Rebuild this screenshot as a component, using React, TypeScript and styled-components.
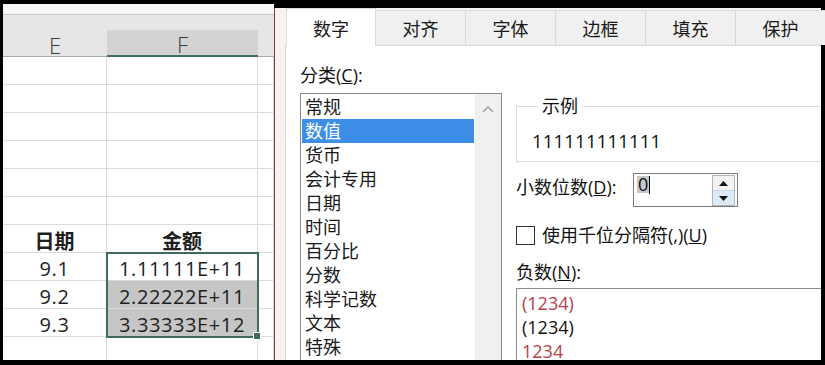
import React from 'react';
import styled, { createGlobalStyle } from 'styled-components';

const GlobalStyle = createGlobalStyle`
	html, body {
		margin: 0;
		padding: 0;
		background: #000;
	}
	body {
		font-family: 'Open Sans', 'Noto Sans CJK SC', sans-serif;
	}
	* {
		box-sizing: border-box;
	}
`;

const FrameUI = styled.div`
	display: flex;
	width: 825px;
	height: 365px;
	padding: 4px 4px 5px 3px;
	background: #000;
	overflow: hidden;
`;

/* ---------- spreadsheet ---------- */

const SheetUI = styled.div`
	position: relative;
	display: flex;
	flex: none;
	flex-direction: column;
	width: 271px;
	background: #fff;
	overflow: hidden;
`;

const FormulaGapUI = styled.div`
	flex: none;
	height: 11px;
	background: #f7f7f7;
	border-bottom: 1px solid #c6c6c6;
`;

const HeaderBandUI = styled.div`
	flex: none;
	height: 15px;
	background: #e6e6e6;
`;

const GridUI = styled.div`
	display: grid;
	grid-template-columns: 104px 151px 16px;
	grid-template-rows: 27px;
	grid-auto-rows: 28px;
`;

const ColHeadUI = styled.div<{ $active?: boolean }>`
	display: flex;
	align-items: center;
	justify-content: center;
	padding-top: 3px;
	color: #3a3a3a;
	font-size: 22px;
	font-weight: 300;
	background: ${(p) => (p.$active ? '#d3d3d3' : '#e6e6e6')};
	border-bottom: ${(p) => (p.$active ? '2px solid #3f6f5a' : '1px solid #ababab')};
`;

const CellUI = styled.div<{ $fill?: boolean; $bold?: boolean }>`
	display: flex;
	align-items: center;
	justify-content: center;
	padding-top: 3px;
	color: #1e1e1e;
	font-size: 20px;
	font-weight: ${(p) => (p.$bold ? 700 : 400)};
	letter-spacing: ${(p) => (p.$bold ? '0' : '0.6px')};
	white-space: nowrap;
	background: ${(p) => (p.$fill ? '#c6c6c6' : '#fff')};
	border-right: 1px solid #dadada;
	border-bottom: 1px solid #dadada;
`;

const SelectionUI = styled.div`
	position: absolute;
	top: 248px;
	left: 103px;
	width: 153px;
	height: 86px;
	border: 2px solid #3f6b5e;
	pointer-events: none;
`;

const FillHandleUI = styled.div`
	position: absolute;
	right: -4px;
	bottom: -4px;
	width: 8px;
	height: 8px;
	background: #3f6b5e;
	border: 1px solid #fff;
`;

/* ---------- format dialog ---------- */

const DialogUI = styled.div`
	display: flex;
	flex: 1;
	flex-direction: column;
	min-width: 0;
	margin-top: 4px;
	padding-left: 10px;
	background: #f7f3f3;
	border-left: 1px solid #7d3b3b;
	color: #111;
	font-size: 18px;
	line-height: 24px;
`;

const TabBarUI = styled.div`
	display: flex;
	flex: none;
	align-items: flex-end;
	height: 37px;
	padding-left: 1px;
`;

const TabUI = styled.div<{ $selected?: boolean }>`
	position: relative;
	z-index: ${(p) => (p.$selected ? 1 : 0)};
	flex: none;
	width: 90px;
	height: ${(p) => (p.$selected ? '38px' : '35px')};
	margin-bottom: ${(p) => (p.$selected ? '-1px' : '0')};
	padding-top: ${(p) => (p.$selected ? '8px' : '6px')};
	color: #1a1a1a;
	text-align: center;
	background: ${(p) => (p.$selected ? '#fff' : '#f0f0f0')};
	border-top: 1px solid #d9d9d9;
	border-right: 1px solid #d9d9d9;

	&:first-child {
		border-left: 1px solid #d9d9d9;
	}
`;

const PanelUI = styled.div`
	display: flex;
	flex: 1;
	gap: 14px;
	min-height: 0;
	padding-left: 14px;
	background: #fff;
	border-top: 1px solid #d9d9d9;
	border-left: 1px solid #d9d9d9;
	overflow: hidden;
`;

const LeftColUI = styled.div`
	display: flex;
	flex: none;
	flex-direction: column;
	width: 202px;
	padding-top: 17px;
`;

const RightColUI = styled.div`
	display: flex;
	flex: none;
	flex-direction: column;
	width: 330px;
	padding-top: 48px;
`;

const LabelUI = styled.div<{ $gap?: number }>`
	margin-top: ${(p) => p.$gap ?? 0}px;
	white-space: nowrap;
`;

const ListBoxUI = styled.div`
	display: flex;
	flex: 1;
	margin-top: 6px;
	border: 1px solid #8a8a8a;
`;

const ListItemsUI = styled.div`
	flex: 1;
	padding: 1px;
`;

const ListItemUI = styled.div<{ $selected?: boolean }>`
	height: 24px;
	padding-left: 3px;
	color: ${(p) => (p.$selected ? '#fff' : '#1a1a1a')};
	background: ${(p) => (p.$selected ? '#3c8ee6' : 'transparent')};
`;

const ScrollBarUI = styled.div`
	display: flex;
	flex: none;
	justify-content: center;
	width: 26px;
	padding-top: 11px;
	background: #f0f0f0;
`;

const GroupUI = styled.fieldset`
	margin: 0;
	padding: 11px 0 8px 15px;
	border: 1px solid #dcdcdc;
	border-right: none;
`;

const LegendUI = styled.legend`
	margin-left: 6px;
	padding: 0 4px;
`;

const SampleUI = styled.div`
	font-size: 18.5px;
	letter-spacing: 0.2px;
`;

const FieldRowUI = styled.div`
	display: flex;
	align-items: flex-start;
	margin-top: 11px;
`;

const FieldLabelUI = styled.div`
	flex: none;
	width: 117px;
	padding-top: 2px;
	white-space: nowrap;
`;

const SpinBoxUI = styled.div`
	display: flex;
	justify-content: space-between;
	width: 105px;
	height: 34px;
	padding: 2px 2px 0 3px;
	border: 1px solid #7a7a7a;
`;

const SpinValueUI = styled.div`
	display: flex;
	align-items: flex-start;
	line-height: 17px;

	span {
		padding: 0 1px;
		background: #c8c8c8;
	}

	i {
		width: 1px;
		height: 18px;
		background: #000;
	}
`;

const SpinButtonsUI = styled.div`
	display: flex;
	flex-direction: column;
	width: 23px;
	height: 31px;
	margin-top: -1px;
	border: 1px solid #b4b4b4;
`;

const SpinHalfUI = styled.div<{ $hover?: boolean }>`
	display: flex;
	flex: 1;
	align-items: center;
	justify-content: center;
	background: ${(p) => (p.$hover ? '#dcebfa' : '#f3f3f3')};

	& + & {
		border-top: 1px solid #c4d6e8;
	}
`;

const CheckRowUI = styled.div`
	display: flex;
	gap: 7px;
	align-items: center;
	margin-top: 16px;
	white-space: nowrap;
`;

const CheckBoxUI = styled.div`
	flex: none;
	width: 19px;
	height: 19px;
	background: #fff;
	border: 1px solid #333;
`;

const NegListUI = styled.div`
	flex: 1;
	margin-top: 4px;
	padding: 2px 0 0 5px;
	border: 1px solid #8a8a8a;
	border-right: none;
`;

const NegItemUI = styled.div<{ $red?: boolean }>`
	height: 24px;
	color: ${(p) => (p.$red ? '#b8404a' : '#111')};
`;

const columns = ['E', 'F', ''];

type Row = { date?: string; amount?: string; bold?: boolean; fill?: boolean };

const rows: Row[] = [
	{},
	{},
	{},
	{},
	{},
	{},
	{ date: '日期', amount: '金额', bold: true },
	{ date: '9.1', amount: '1.11111E+11' },
	{ date: '9.2', amount: '2.22222E+11', fill: true },
	{ date: '9.3', amount: '3.33333E+12', fill: true },
	{},
];

const tabs = ['数字', '对齐', '字体', '边框', '填充', '保护'];
const categories = ['常规', '数值', '货币', '会计专用', '日期', '时间', '百分比', '分数', '科学记数', '文本', '特殊'];
const negatives = [
	{ text: '(1234)', red: true },
	{ text: '(1234)', red: false },
	{ text: '1234', red: true },
];

const Triangle = ({ up }: { up?: boolean }) => (
	<svg width='9' height='5' viewBox='0 0 9 5'>
		<polygon points={up ? '0,5 4.5,0 9,5' : '0,0 4.5,5 9,0'} fill='#111' />
	</svg>
);

const renderSheet = () => (
	<SheetUI>
		<FormulaGapUI />
		<HeaderBandUI />
		<GridUI>
			{columns.map((c) => (
				<ColHeadUI key={`h-${c}`} $active={c === 'F'}>
					{c}
				</ColHeadUI>
			))}
			{rows.map((r, i) => (
				<React.Fragment key={i}>
					<CellUI $bold={r.bold}>{r.date}</CellUI>
					<CellUI $bold={r.bold} $fill={r.fill}>
						{r.amount}
					</CellUI>
					<CellUI />
				</React.Fragment>
			))}
		</GridUI>
		<SelectionUI>
			<FillHandleUI />
		</SelectionUI>
	</SheetUI>
);

const renderDialog = () => (
	<DialogUI>
		<TabBarUI>
			{tabs.map((t, i) => (
				<TabUI key={t} $selected={i === 0}>
					{t}
				</TabUI>
			))}
		</TabBarUI>
		<PanelUI>
			<LeftColUI>
				<LabelUI>
					分类(<u>C</u>):
				</LabelUI>
				<ListBoxUI>
					<ListItemsUI>
						{categories.map((c, i) => (
							<ListItemUI key={c} $selected={i === 1}>
								{c}
							</ListItemUI>
						))}
					</ListItemsUI>
					<ScrollBarUI>
						<svg width='12' height='8' viewBox='0 0 12 8'>
							<polyline points='1,7 6,2 11,7' fill='none' stroke='#a6a6a6' strokeWidth='1.6' />
						</svg>
					</ScrollBarUI>
				</ListBoxUI>
			</LeftColUI>
			<RightColUI>
				<GroupUI>
					<LegendUI>示例</LegendUI>
					<SampleUI>111111111111</SampleUI>
				</GroupUI>
				<FieldRowUI>
					<FieldLabelUI>
						小数位数(<u>D</u>):
					</FieldLabelUI>
					<SpinBoxUI>
						<SpinValueUI>
							<span>0</span>
							<i />
						</SpinValueUI>
						<SpinButtonsUI>
							<SpinHalfUI>
								<Triangle up />
							</SpinHalfUI>
							<SpinHalfUI $hover>
								<Triangle />
							</SpinHalfUI>
						</SpinButtonsUI>
					</SpinBoxUI>
				</FieldRowUI>
				<CheckRowUI>
					<CheckBoxUI />
					<span>
						使用千位分隔符(,)(<u>U</u>)
					</span>
				</CheckRowUI>
				<LabelUI $gap={13}>
					负数(<u>N</u>):
				</LabelUI>
				<NegListUI>
					{negatives.map((n, i) => (
						<NegItemUI key={i} $red={n.red}>
							{n.text}
						</NegItemUI>
					))}
				</NegListUI>
			</RightColUI>
		</PanelUI>
	</DialogUI>
);

const App = () => (
	<>
		<GlobalStyle />
		<FrameUI>
			{renderSheet()}
			{renderDialog()}
		</FrameUI>
	</>
);

export default App;
